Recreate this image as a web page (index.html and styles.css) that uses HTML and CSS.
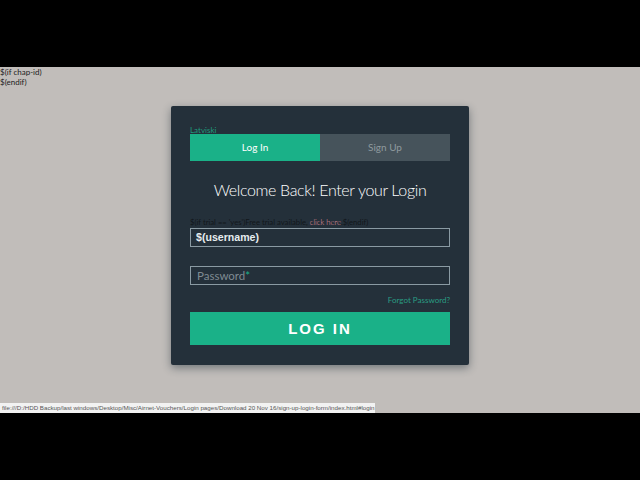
FILE: index.html
```html
<!DOCTYPE html>
<html lang="en">
<head>
<meta charset="UTF-8">
<meta name="viewport" content="width=device-width, initial-scale=1.0">
<title>Login</title>
<link rel="stylesheet" href="styles.css">
</head>
<body>
  <div class="letterbox"></div>
  <main class="page">
    <div class="chap">$(if chap-id)<br>$(endif)</div>
    <div class="form">
      <a class="lang" href="#">Latviski</a>
      <ul class="tabs">
        <li class="tab active">Log In</li>
        <li class="tab">Sign Up</li>
      </ul>
      <h1>Welcome Back! Enter your Login</h1>
      <p class="trial">$(if trial == 'yes')Free trial available, <a href="#">click here</a>.$(endif)</p>
      <div class="field filled">$(username)</div>
      <div class="field">Password<span class="req">*</span></div>
      <p class="forgot"><a href="#">Forgot Password?</a></p>
      <button class="submit">LOG IN</button>
    </div>
    <div class="status">file:///D:/HDD Backup/last windows/Desktop/Misc/Airnet-Vouchers/Login pages/Download 20 Nov 16/sign-up-login-form/index.html#login</div>
  </main>
  <div class="letterbox"></div>
</body>
</html>
```

FILE: styles.css
```css
* { box-sizing: border-box; }
html, body { height: 100%; }
body { margin: 0; background-color: #000; display: flex; flex-direction: column; font-family: "Lato", "Noto Sans", sans-serif; overflow: hidden; }
a { text-decoration: none; }
.letterbox { height: 67px; flex: none; background-color: #000; }
.page { position: relative; height: 346px; flex: none; background-color: #c1bdba; }
.chap { height: 39px; font-size: 8px; line-height: 10px; color: #222; }
.form { width: 298px; height: 259px; margin-left: 171px; padding: 20px 19px; background-color: #24303a; border-radius: 2px; box-shadow: 0 3px 8px rgba(19, 35, 47, 0.45); }
.lang { display: block; height: 8px; font-size: 8px; line-height: 9px; color: #1f9a7d; }
.tabs { list-style: none; margin: 0; padding: 0; display: flex; height: 27px; }
.tab { flex: 1; font-size: 10px; line-height: 27px; text-align: center; color: #8f9a9f; background-color: #46535b; }
.tab.active { color: #fff; background-color: #1ab188; }
h1 { margin: 19px 0 0; height: 20px; font-size: 16px; font-weight: 300; line-height: 20px; letter-spacing: -0.35px; text-align: center; color: #fff; }
.trial { margin: 18px 0 0; height: 10px; font-size: 7.7px; line-height: 9px; color: #12171b; white-space: nowrap; }
.trial a { color: #ee9aa4; font-weight: 300; }
.field { height: 19px; padding-left: 6px; border: 1px solid #8a9aa3; font-size: 11.5px; line-height: 17px; color: #7f8b92; }
.field.filled { margin-bottom: 19px; padding-left: 5px; font-family: "Liberation Sans", sans-serif; font-size: 10.6px; font-weight: bold; color: #e6ecef; }
.req { color: #1ab188; }
.forgot { margin: 10px 0 0; height: 10px; font-size: 8px; line-height: 10px; text-align: right; }
.forgot a { color: #2a9c83; }
.submit { display: block; width: 100%; height: 33px; margin-top: 7px; padding: 0; border: 0; background-color: #1ab188; color: #fff; font-family: "Liberation Sans", sans-serif; font-size: 15px; font-weight: bold; letter-spacing: 2px; }
.status { position: absolute; left: 0; bottom: 0; width: 375px; height: 10px; padding-left: 2px; background-color: #f2f2f2; color: #555; font-family: "Liberation Sans", sans-serif; font-size: 6.2px; line-height: 10px; white-space: nowrap; overflow: hidden; }
```
